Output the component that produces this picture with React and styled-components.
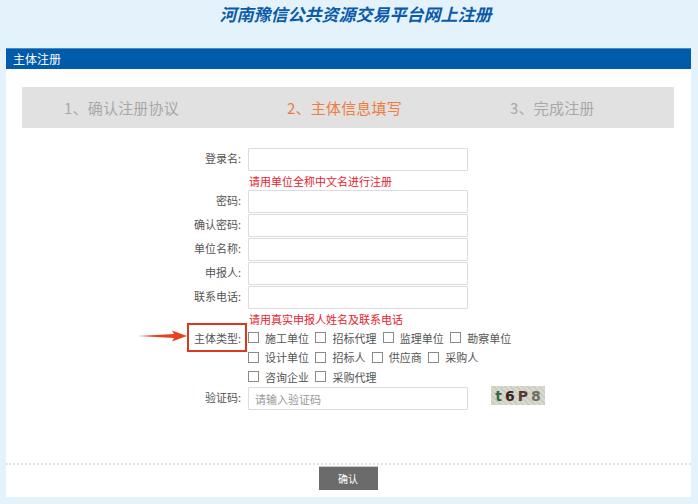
import React from "react";
import styled, { createGlobalStyle } from "styled-components";

const GlobalStyle = createGlobalStyle`
  html, body {
    margin: 0;
    padding: 0;
    height: 504px;
    overflow: hidden;
    background: #e4f2fc;
    font-family: "Noto Sans CJK SC", "Noto Sans", sans-serif;
  }
`;

const Page = styled.div`
  width: 698px;
  height: 504px;
  padding: 0 7px 0 6px;
  box-sizing: border-box;
`;
const Title = styled.h1`
  margin: 0;
  height: 48px;
  padding: 2px 0 0 14px;
  box-sizing: border-box;
  text-align: center;
  font-size: 17px;
  line-height: 24px;
  font-weight: 700;
  font-style: italic;
  color: #0b5ba8;
`;
const Panel = styled.div`
  height: 449px;
  background: #fff;
  display: flex;
  flex-direction: column;
`;
const PanelHead = styled.div`
  height: 21px;
  background: #005bab;
  border-top: 1px solid #4a8cc6;
  box-sizing: border-box;
  padding-left: 7px;
  color: #fff;
  font-size: 12px;
  line-height: 20px;
`;
const Steps = styled.div`
  margin: 18px 17px 0 16px;
  height: 41px;
  background: #e1e1e1;
  display: grid;
  grid-template-columns: 223px 223px 1fr;
  align-items: center;
  padding-left: 42px;
`;
const Step = styled.div`
  font-size: 15px;
  letter-spacing: 0.2px;
  color: ${({ $active }) => ($active ? "#ee7d3f" : "#a8a8a8")};
`;
const Form = styled.div`
  position: relative;
  flex: 1;
  padding: 20px 0 0 0;
  display: flex;
  flex-direction: column;
`;
const Row = styled.div`
  display: flex;
  height: ${({ $height }) => $height || 24}px;
`;
const Label = styled.div`
  width: 242px;
  flex: none;
  text-align: right;
  padding-right: 7px;
  box-sizing: border-box;
  font-size: 11px;
  line-height: 20px;
  color: #555;
`;
const Input = styled.input`
  width: 220px;
  height: 23px;
  margin: 0;
  padding: 0 6px;
  box-sizing: border-box;
  background: #fff;
  border: 1px solid #dcdcdc;
  border-radius: 1px;
  outline: none;
  font-family: inherit;
  font-size: 11px;
  &::placeholder {
    color: #999;
    opacity: 1;
  }
`;
const Hint = styled.div`
  margin-left: 243px;
  height: 18px;
  font-size: 11px;
  line-height: 18px;
  color: #e8212b;
`;
const Options = styled.div`
  display: flex;
  flex-direction: column;
`;
const OptionRow = styled.div`
  display: flex;
  height: 19.6px;
  align-items: center;
`;
const Option = styled.label`
  display: flex;
  align-items: center;
  margin-right: 6.4px;
  font-size: 11px;
  color: #555;
`;
const Box = styled.span`
  width: 11px;
  height: 11px;
  flex: none;
  box-sizing: border-box;
  border: 1px solid #8a8a8a;
  margin-right: 6px;
  background: #fff;
`;
const Captcha = styled.div`
  width: 54px;
  height: 19px;
  margin: -1px 0 0 23px;
  background: repeating-linear-gradient(45deg, #dcd8cc 0 2px, #c9cfc4 2px 4px);
  display: flex;
  align-items: center;
  justify-content: center;
  gap: 3px;
  font-family: "DejaVu Sans", sans-serif;
  font-size: 14px;
  font-weight: 700;
`;
const CaptchaChar = styled.span`
  color: ${({ $color }) => $color};
`;
const HighlightBox = styled.div`
  position: absolute;
  left: 181px;
  top: 195px;
  width: 60px;
  height: 29px;
  box-sizing: border-box;
  border: 2px solid #d9391c;
`;
const Arrow = styled.svg`
  position: absolute;
  left: 132px;
  top: 202px;
`;
const Footer = styled.div`
  height: 34px;
  box-sizing: border-box;
  border-top: 2px dotted #e2e2e2;
  display: flex;
  justify-content: center;
  padding: 1px 1px 0 0;
`;
const Submit = styled.button`
  width: 59px;
  height: 24px;
  border: none;
  border-top: 1px solid #ccc;
  padding: 0;
  background: #6b6b6b;
  color: #fff;
  font-family: inherit;
  font-size: 10px;
`;

const rows1 = ["密码:", "确认密码:", "单位名称:", "申报人:", "联系电话:"];
const typeRows = [
  ["施工单位", "招标代理", "监理单位", "勘察单位"],
  ["设计单位", "招标人", "供应商", "采购人"],
  ["咨询企业", "采购代理"],
];

export default function App() {
  return (
    <Page>
      <GlobalStyle />
      <Title>河南豫信公共资源交易平台网上注册</Title>
      <Panel>
        <PanelHead>主体注册</PanelHead>
        <Steps>
          <Step>1、确认注册协议</Step>
          <Step $active>2、主体信息填写</Step>
          <Step>3、完成注册</Step>
        </Steps>
        <Form>
          <Row>
            <Label>登录名:</Label>
            <Input />
          </Row>
          <Hint>请用单位全称中文名进行注册</Hint>
          {rows1.map((label) => (
            <Row key={label}>
              <Label>{label}</Label>
              <Input />
            </Row>
          ))}
          <Hint>请用真实申报人姓名及联系电话</Hint>
          <Row $height={59}>
            <Label>主体类型:</Label>
            <Options>
              {typeRows.map((row) => (
                <OptionRow key={row[0]}>
                  {row.map((name) => (
                    <Option key={name}>
                      <Box />
                      {name}
                    </Option>
                  ))}
                </OptionRow>
              ))}
            </Options>
          </Row>
          <Row>
            <Label>验证码:</Label>
            <Input placeholder="请输入验证码" />
            <Captcha>
              <CaptchaChar $color="#2f6b4a">t</CaptchaChar>
              <CaptchaChar $color="#3a2420">6</CaptchaChar>
              <CaptchaChar $color="#5a3a34">P</CaptchaChar>
              <CaptchaChar $color="#6f6f68">8</CaptchaChar>
            </Captcha>
          </Row>
          <HighlightBox />
          <Arrow width="50" height="12" viewBox="0 0 50 12">
            <path d="M0 6 L36 4 L34 0.5 L49 6 L34 11.5 L36 8 Z" fill="#e8431f" />
          </Arrow>
        </Form>
        <Footer>
          <Submit>确认</Submit>
        </Footer>
      </Panel>
    </Page>
  );
}
